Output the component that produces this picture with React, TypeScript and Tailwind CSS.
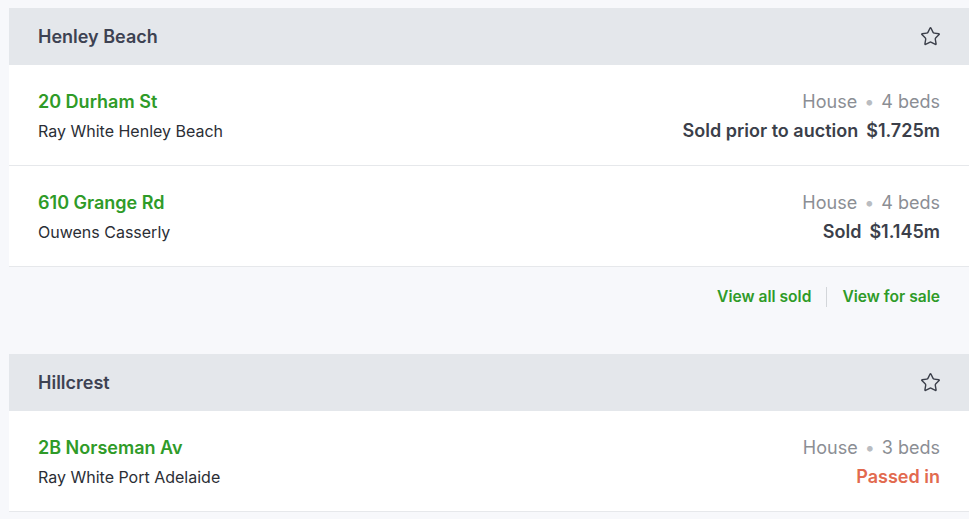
import { Star } from "lucide-react";

interface Listing {
  address: string;
  agency: string;
  type: string;
  beds: number;
  status: string;
  price?: string;
  passed?: boolean;
}

interface Suburb {
  name: string;
  listings: Listing[];
  footer?: boolean;
}

const suburbs: Suburb[] = [
  {
    name: "Henley Beach",
    footer: true,
    listings: [
      {
        address: "20 Durham St",
        agency: "Ray White Henley Beach",
        type: "House",
        beds: 4,
        status: "Sold prior to auction",
        price: "$1.725m",
      },
      {
        address: "610 Grange Rd",
        agency: "Ouwens Casserly",
        type: "House",
        beds: 4,
        status: "Sold",
        price: "$1.145m",
      },
    ],
  },
  {
    name: "Hillcrest",
    listings: [
      {
        address: "2B Norseman Av",
        agency: "Ray White Port Adelaide",
        type: "House",
        beds: 3,
        status: "Passed in",
        passed: true,
      },
    ],
  },
];

function ListingRow({ item }: { item: Listing }) {
  return (
    <div className="flex justify-between bg-white pl-[29px] pr-[29px] pt-[25px] pb-[22px] border-b border-[#e6e8eb]">
      <div className="flex flex-col gap-[5px]">
        <span className="text-[18px] leading-6 font-semibold text-[#2f9b28]">{item.address}</span>
        <span className="text-[16px] leading-6 text-[#2b2e35]">{item.agency}</span>
      </div>
      <div className="flex flex-col items-end gap-[5px]">
        <span className="text-[18px] leading-6 text-[#8b8e94]">
          {item.type}
          <span className="mx-[7px] text-[#b9bcc1]">•</span>
          {item.beds} beds
        </span>
        {item.passed ? (
          <span className="text-[18px] leading-6 font-semibold text-[#e26a4f]">{item.status}</span>
        ) : (
          <span className="flex gap-2 text-[18px] leading-6 font-semibold text-[#3b3f4a]">
            <span>{item.status}</span>
            <span>{item.price}</span>
          </span>
        )}
      </div>
    </div>
  );
}

export default function App() {
  return (
    <div
      className="min-h-screen bg-[#f7f8fb] pt-2 pl-[9px]"
      style={{ fontFamily: "Inter, 'Noto Sans', sans-serif" }}
    >
      {suburbs.map((s) => (
        <section key={s.name} className="mb-7">
          <div className="flex h-[57px] items-center justify-between bg-[#e4e7eb] pl-[29px] pr-[28px]">
            <h2 className="text-[18px] font-semibold text-[#3d4252]">{s.name}</h2>
            <Star className="h-[21px] w-[21px] text-[#3b3f4a]" strokeWidth={1.6} />
          </div>
          {s.listings.map((l) => (
            <ListingRow key={l.address} item={l} />
          ))}
          {s.footer && (
            <div className="flex h-[59px] items-center justify-end pr-[29px] text-[15.6px] font-semibold text-[#2f9b28]">
              <span>View all sold</span>
              <span className="mx-[15px] h-5 w-px bg-[#d3d6da]" />
              <span>View for sale</span>
            </div>
          )}
        </section>
      ))}
    </div>
  );
}
